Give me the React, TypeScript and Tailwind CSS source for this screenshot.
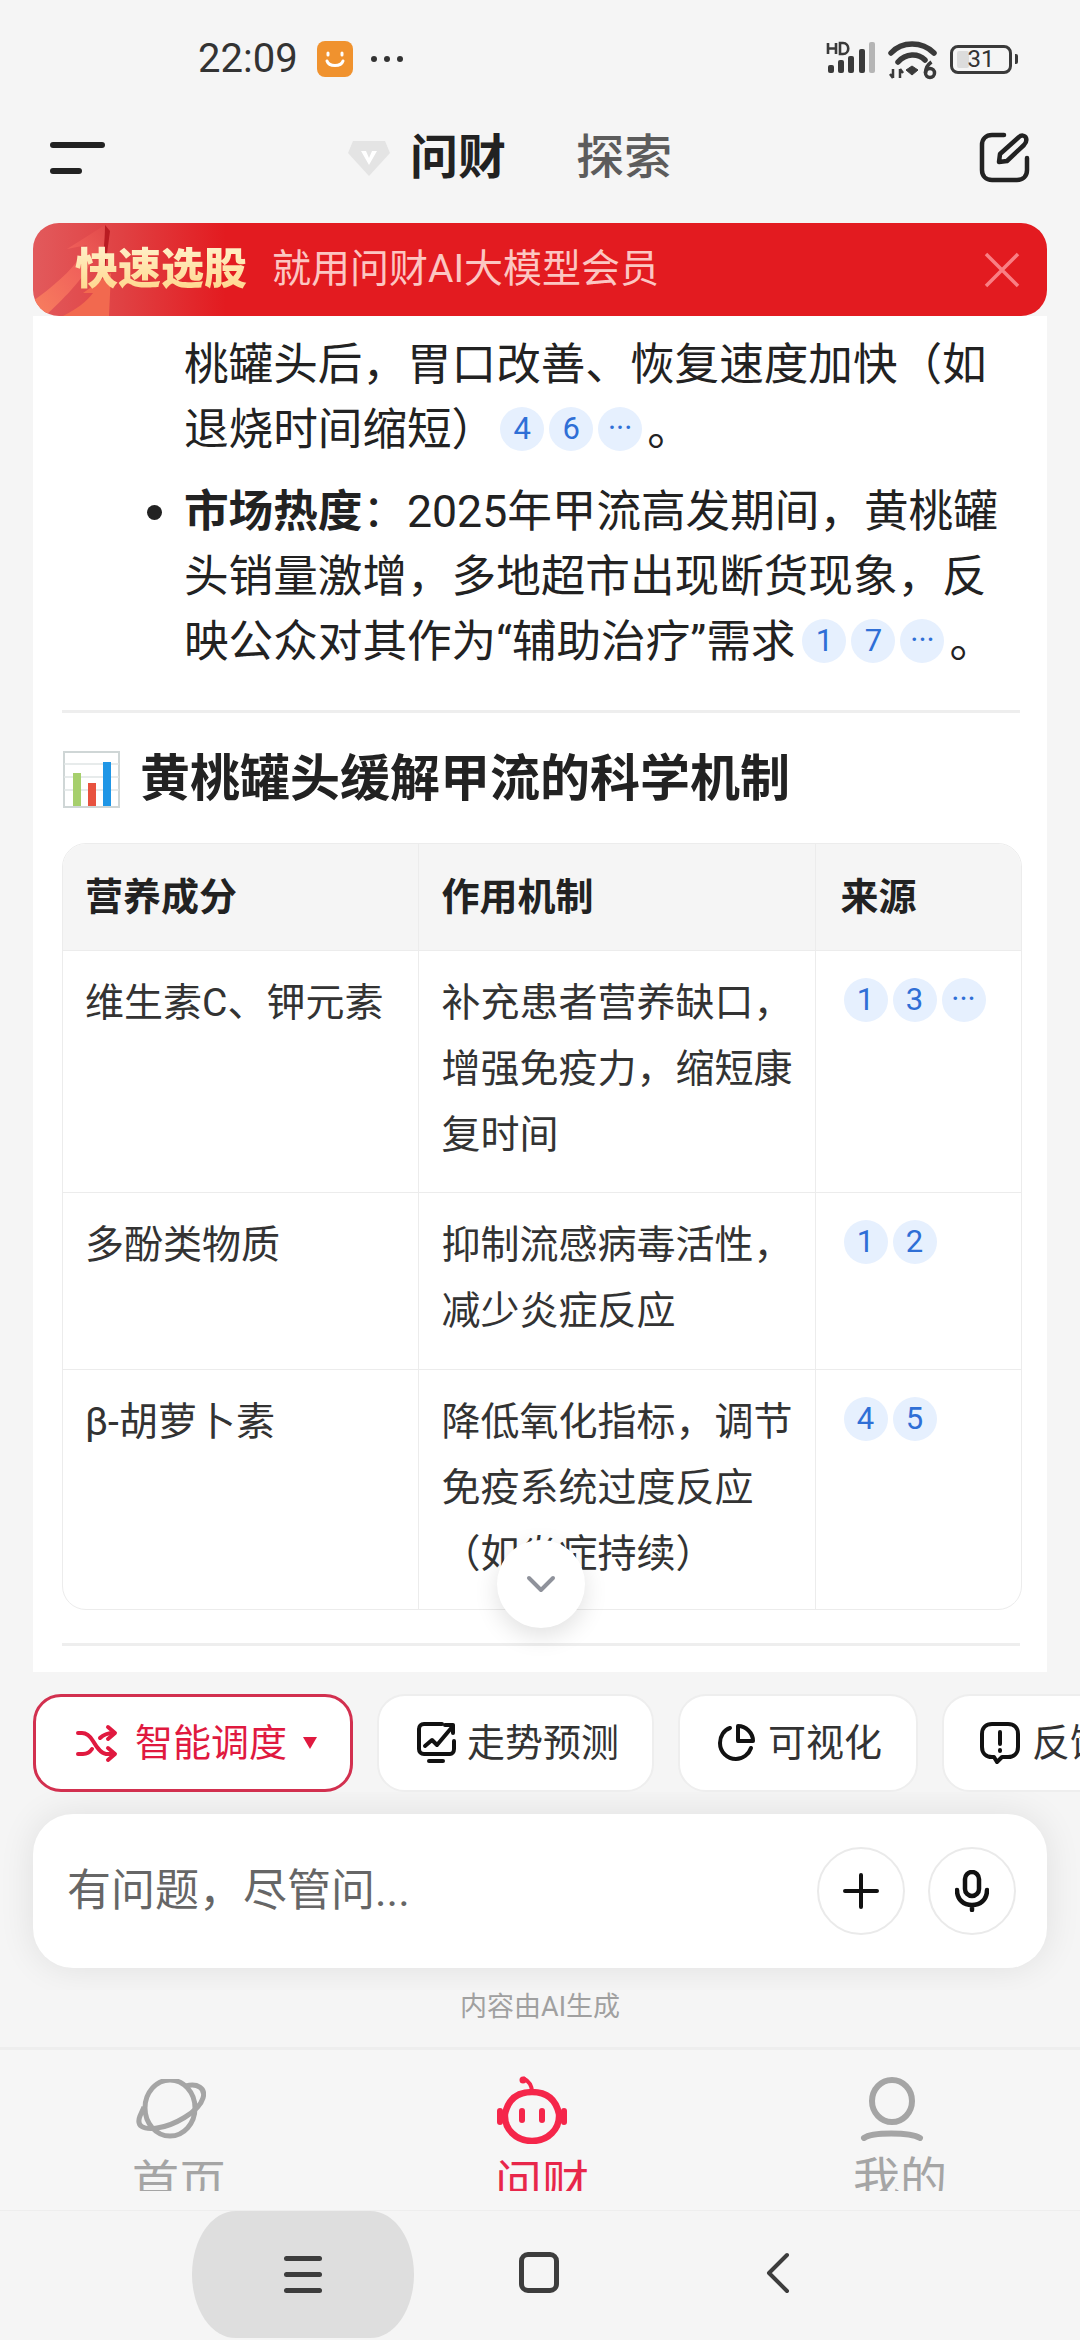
import type { ReactNode } from 'react';

// Citation bubble, used both inline in text and in the table
function Cite({ label }: { label: string }) {
  return (
    <span className="inline-flex w-[44px] h-[44px] mr-[5px] rounded-full bg-[#e6f0fe] text-[#2f6fd6] text-[31px] leading-none tracking-normal items-center justify-center align-[6px]">
      {label}
    </span>
  );
}

function StatusBar() {
  return (
    <div className="h-[100px] pt-[18px] pl-[198px] pr-[62px] flex items-center justify-between text-[#333]">
      <div className="flex items-center">
        <span className="text-[40px] leading-none">22:09</span>
        <div className="ml-[19px] w-[36px] h-[36px] rounded-[8px] bg-[#f0922e]">
          <svg viewBox="0 0 36 36" className="w-[36px] h-[36px]" fill="none" stroke="#fff" strokeLinecap="round">
            <path d="M11 12v2M25 12v2" strokeWidth="3" />
            <path d="M10 20c2 6 14 6 16 0" strokeWidth="3" />
          </svg>
        </div>
        <div className="ml-[18px] flex gap-[7px]">
          <span className="w-[6px] h-[6px] rounded-full bg-[#333]" />
          <span className="w-[6px] h-[6px] rounded-full bg-[#333]" />
          <span className="w-[6px] h-[6px] rounded-full bg-[#333]" />
        </div>
      </div>
      <div className="flex items-center">
        <svg width="54" height="36" viewBox="0 0 54 36" fill="#3a3a3a">
          <rect x="3" y="24" width="6" height="8" rx="2" />
          <rect x="13" y="19" width="6" height="13" rx="2" />
          <rect x="23" y="15" width="6" height="17" rx="2" />
          <rect x="34" y="8" width="6" height="24" rx="2" />
          <rect x="44" y="1" width="6" height="31" rx="2" fill="#b5b5b5" />
          <path d="M3 2v11M11 2v11M3 7.5h8" stroke="#3a3a3a" strokeWidth="2.6" fill="none" />
          <path d="M15 2v11h3c7 0 7-11 0-11z" stroke="#3a3a3a" strokeWidth="2.6" fill="none" />
        </svg>
        <svg width="50" height="40" viewBox="0 0 50 40" fill="none" stroke="#3a3a3a" className="ml-[9px] mt-[4px]">
          <path d="M3 12C14 0 34 0 46 12" strokeWidth="5.5" strokeLinecap="round" />
          <path d="M10 21C18 12 30 12 37 19" strokeWidth="5.5" strokeLinecap="round" />
          <path d="M18 29l6-4 6 4-6 5z" fill="#3a3a3a" strokeWidth="1" />
          <path d="M5 28v9M12 28v9M2 33l3 4M15 32l-3-4" strokeWidth="2.5" />
          <circle cx="42" cy="32" r="4.5" strokeWidth="3.5" />
          <path d="M37.5 32c0-6 3-9 6-11" strokeWidth="3.5" />
        </svg>
        <div className="ml-[12px] relative w-[62px] h-[29px] rounded-[8px] border-[3px] border-[#3a3a3a] flex items-center justify-center">
          <span className="absolute left-[4px] top-[3px] bottom-[3px] w-[12px] bg-[#dcdcdc] rounded-[2px]" />
          <span className="relative text-[24px] leading-none">31</span>
        </div>
        <span className="ml-[3px] w-[3px] h-[10px] bg-[#3a3a3a] rounded-r-[2px]" />
      </div>
    </div>
  );
}

function Header() {
  return (
    <div className="h-[123px] pb-[8px] pl-[50px] flex items-center">
      <div className="w-[55px] flex flex-col gap-[20px]">
        <span className="block w-[55px] h-[6px] rounded-full bg-[#222]" />
        <span className="block w-[32px] h-[6px] rounded-full bg-[#222]" />
      </div>
      <svg width="44" height="38" viewBox="0 0 44 38" className="ml-[242px]">
        <path d="M6 2h32l5 12-21 23L1 14z" fill="#e4e4e4" />
        <path d="M14 12l8 14 8-14h-5l-3 7-3-7z" fill="#fff" />
      </svg>
      <span className="ml-[19px] text-[48px] leading-none font-bold text-[#222]">问财</span>
      <span className="ml-[70px] text-[48px] leading-none font-medium text-[#5c5c5c]">探索</span>
      <svg width="52" height="52" viewBox="0 0 52 52" fill="none" stroke="#222" strokeWidth="4.5" strokeLinecap="round" strokeLinejoin="round" className="ml-auto mr-[49px] mt-[1px]">
        <path d="M25 3H13C7 3 3 7 3 13v25c0 6 4 10 10 10h25c6 0 10-4 10-10V26" />
        <path d="M20 30l1-8L40 5c2-2 6-2 7 1 1 3 0 5-2 7L28 29z" />
      </svg>
    </div>
  );
}

function Banner() {
  return (
    <div className="relative z-10 mx-[33px] h-[93px] rounded-[26px] overflow-hidden bg-[linear-gradient(90deg,#e25a5c_0%,#e04042_9%,#e31b20_19%)] flex items-center">
      <svg width="120" height="93" viewBox="0 0 120 93" className="absolute left-0 top-0">
        <defs>
          <linearGradient id="bannerArrow" x1="0" y1="1" x2="1" y2="0">
            <stop offset="0" stopColor="#f8805f" />
            <stop offset="0.6" stopColor="#f0605a" />
            <stop offset="1" stopColor="#e24a4a" />
          </linearGradient>
        </defs>
        <path d="M72 2l5 6-5 38-2-3z" fill="#b91c22" />
        <path d="M0 78C22 62 44 44 54 22L34 26 72 2 70 43 63 30C52 56 28 78 12 93H0z" fill="url(#bannerArrow)" />
        <path d="M30 93C44 86 54 78 60 70L50 70 78 50 76 93z" fill="#f2694f" />
      </svg>
      <span className="relative ml-[42px] text-[43px] leading-[1.1] font-black bg-[linear-gradient(180deg,#fff0c8,#ffd68a)] bg-clip-text text-transparent">快速选股</span>
      <span className="relative ml-[25px] text-[39px] leading-none text-[#fcc6c2]">就用问财AI大模型会员</span>
      <svg width="36" height="36" viewBox="0 0 36 36" fill="none" stroke="#f97f84" strokeWidth="3.5" className="ml-auto mr-[27px]">
        <path d="M2 2l32 32M34 2L2 34" />
      </svg>
    </div>
  );
}

function Bullet({ children }: { children: ReactNode }) {
  return (
    <li className="relative pl-[151px] whitespace-nowrap">
      <span className="absolute left-[114px] top-[25px] w-[15px] h-[15px] rounded-full bg-[#222]" />
      {children}
    </li>
  );
}

const tableRows = [
  { name: '维生素C、钾元素', mech: ['补充患者营养缺口，', '增强免疫力，缩短康', '复时间'], refs: ['1', '3', '···'], h: 'h-[242px]' },
  { name: '多酚类物质', mech: ['抑制流感病毒活性，', '减少炎症反应'], refs: ['1', '2'], h: 'h-[177px]' },
  { name: 'β-胡萝卜素', mech: ['降低氧化指标，调节', '免疫系统过度反应', '（如炎症持续）'], refs: ['4', '5'], h: 'h-[240px]' },
];

function ScienceTable() {
  return (
    <div className="ml-[29px] mr-[25px] mt-[35px] rounded-[24px] border border-[#ececec] overflow-hidden">
      <table className="w-full table-fixed border-collapse text-[39px] leading-[66px] text-[#333]">
        <colgroup>
          <col className="w-[355px]" />
          <col className="w-[397px]" />
          <col />
        </colgroup>
        <thead>
          <tr className="h-[106px] bg-[#f5f5f5] text-[38px] text-[#222] text-left">
            <th className="pl-[22px] font-bold">营养成分</th>
            <th className="pl-[23px] font-bold border-l border-[#ececec]">作用机制</th>
            <th className="pl-[25px] font-bold border-l border-[#ececec]">来源</th>
          </tr>
        </thead>
        <tbody>
          {tableRows.map((row) => (
            <tr key={row.name} className={`${row.h} border-t border-[#ececec] align-top`}>
              <td className="pl-[22px] pt-[19px]">{row.name}</td>
              <td className="pl-[23px] pt-[19px] border-l border-[#ececec] whitespace-nowrap">
                {row.mech.map((line) => (
                  <div key={line}>{line}</div>
                ))}
              </td>
              <td className="pl-[28px] pt-[27px] border-l border-[#ececec]">
                <div className="flex">
                  {row.refs.map((r) => (
                    <Cite key={r} label={r} />
                  ))}
                </div>
              </td>
            </tr>
          ))}
        </tbody>
      </table>
    </div>
  );
}

function Article() {
  return (
    <div className="relative z-0 mx-[33px] h-[1356px] bg-white overflow-hidden">
      <ul className="-mt-[48px] text-[44.6px] leading-[65px] text-[#222] flex flex-col gap-[17px]">
        <Bullet>
          {/* scrolled under the banner, only a comma tail shows */}
          <span className="relative -top-[9px]">
            <b className="font-bold">患者反馈</b>：部分患者称，食用黄
          </span>
          <br />
          桃罐头后，胃口改善、恢复速度加快（如
          <br />
          退烧时间缩短）
          <span className="ml-[4px]" />
          <Cite label="4" />
          <Cite label="6" />
          <Cite label="···" />。
        </Bullet>
        <Bullet>
          <b className="font-bold">市场热度</b>：2025年甲流高发期间，黄桃罐
          <br />
          头销量激增，多地超市出现断货现象，反
          <br />
          映公众对其作为“辅助治疗”需求
          <span className="ml-[7px]" />
          <Cite label="1" />
          <Cite label="7" />
          <Cite label="···" />。
        </Bullet>
      </ul>
      <div className="ml-[29px] mr-[27px] mt-[35px] h-[3px] bg-[#eee]" />
      <div className="ml-[30px] mt-[37px] flex items-center gap-[20px] h-[58px]">
        <svg width="57" height="57" viewBox="0 0 57 57">
          <rect x="1" y="1" width="55" height="55" fill="#fff" stroke="#cfd6d6" strokeWidth="2" />
          <path d="M1 13h55M1 26h55M1 39h55" stroke="#dfe5e5" strokeWidth="1.5" />
          <rect x="10" y="22" width="8" height="33" fill="#a6cf6c" />
          <rect x="25" y="32" width="8" height="23" fill="#e8523f" />
          <rect x="40" y="11" width="8" height="44" fill="#1f96e6" />
        </svg>
        <h2 className="text-[50px] leading-none font-bold text-[#222]">黄桃罐头缓解甲流的科学机制</h2>
      </div>
      <ScienceTable />
      <div className="ml-[29px] mr-[27px] mt-[33px] h-[3px] bg-[#eee]" />
      <button className="absolute left-[464px] top-[1224px] w-[88px] h-[88px] rounded-full bg-white shadow-[0_8px_24px_rgba(0,0,0,0.12)] flex items-center justify-center">
        <svg width="30" height="18" viewBox="0 0 30 18" fill="none" stroke="#8f929b" strokeWidth="4" strokeLinecap="round" strokeLinejoin="round">
          <path d="M3 3l12 12L27 3" />
        </svg>
      </button>
    </div>
  );
}

function Chip({ icon, label, className }: { icon: ReactNode; label: string; className: string }) {
  return (
    <div className={`shrink-0 h-[98px] rounded-[28px] bg-white border-2 border-[#eee] flex items-center text-[38px] leading-none text-[#333] ${className}`}>
      {icon}
      {label}
    </div>
  );
}

function ChipRow() {
  return (
    <div className="h-[120px] pt-[22px] pl-[33px] flex gap-[23px] overflow-hidden">
      <div className="shrink-0 w-[320px] h-[98px] pl-[40px] rounded-[28px] bg-white border-[3px] border-[#d2304f] flex items-center text-[38px] leading-none text-[#e0193f]">
        <svg width="42" height="46" viewBox="0 0 42 46" fill="none" stroke="#e0193f" strokeWidth="4" strokeLinecap="round" strokeLinejoin="round" className="mr-[17px]">
          <path d="M2 13h4c5 0 8 3 11 8s7 12 13 13h8" />
          <path d="M2 34h5c4 0 7-2 9-5M24 18c3-3 6-5 14-5" />
          <path d="M32 7l7 6-7 6M32 28l7 6-7 6" />
        </svg>
        智能调度
        <svg width="14" height="14" viewBox="0 0 14 14" className="ml-[16px]">
          <path d="M0 1h14L7 13z" fill="#e0193f" />
        </svg>
      </div>
      <Chip
        className="w-[277px] pl-[37px] ml-[1px]"
        label="走势预测"
        icon={
          <svg width="40" height="44" viewBox="0 0 40 44" fill="none" stroke="#111" strokeWidth="4" strokeLinecap="round" strokeLinejoin="round" className="mr-[11px]">
            <path d="M26 3H8C5 3 3 5 3 8v20c0 3 2 5 5 5h26c2 0 4-2 4-5V20" />
            <path d="M9 25l7-6 5 5L37 5" />
            <path d="M29 4h8v8" />
            <path d="M13 40h14" />
          </svg>
        }
      />
      <Chip
        className="w-[240px] pl-[37px] ml-[1px]"
        label="可视化"
        icon={
          <svg width="40" height="40" viewBox="0 0 40 40" fill="none" stroke="#111" strokeWidth="4" strokeLinecap="round" strokeLinejoin="round" className="mr-[11px]">
            <path d="M13 5C7 7 3 13 3 20c0 9 7 16 16 16 7 0 13-5 15-11" />
            <path d="M21 3v15h15C36 10 29 3 21 3z" />
          </svg>
        }
      />
      <Chip
        className="w-[240px] pl-[35px] ml-[1px]"
        label="反馈"
        icon={
          <svg width="42" height="44" viewBox="0 0 42 44" fill="none" stroke="#111" strokeWidth="4" strokeLinecap="round" strokeLinejoin="round" className="mr-[11px]">
            <path d="M13 3h16c6 0 10 4 10 10v13c0 6-4 10-10 10H23l-5 5-3-5h-2C7 36 3 32 3 26V13C3 7 7 3 13 3z" />
            <path d="M21 11v12M21 29v1" />
          </svg>
        }
      />
    </div>
  );
}

function InputBox() {
  return (
    <div className="h-[198px] pt-[22px] overflow-hidden">
      <div className="mx-[33px] h-[154px] rounded-[40px] bg-white shadow-[0_0_36px_rgba(0,0,0,0.09)] pl-[34px] pr-[31px] flex items-center">
        <span className="text-[44px] leading-none text-[#666]">有问题，尽管问...</span>
        <div className="ml-auto w-[88px] h-[88px] rounded-full border-2 border-[#eaeaea] flex items-center justify-center">
          <svg width="36" height="36" viewBox="0 0 36 36" stroke="#111" strokeWidth="4" strokeLinecap="round">
            <path d="M18 2v32M2 18h32" />
          </svg>
        </div>
        <div className="ml-[23px] w-[88px] h-[88px] rounded-full border-2 border-[#eaeaea] flex items-center justify-center">
          <svg width="34" height="42" viewBox="0 0 34 42" fill="none" stroke="#111" strokeWidth="4.5" strokeLinecap="round">
            <rect x="10" y="2" width="14" height="24" rx="7" />
            <path d="M2 20c0 10 7 15 15 15s15-5 15-15M17 35v5" />
          </svg>
        </div>
      </div>
    </div>
  );
}

function TabBar() {
  return (
    <div className="h-[163px] border-t-[3px] border-[#eee] bg-[#f6f6f6]">
      <div className="h-[141px] overflow-hidden flex">
        <div className="w-[358px] pl-[132px] pt-[29px] text-[#a5a5a5]">
          <svg width="70" height="60" viewBox="-1 -1 70 60" fill="none" stroke="#a5a5a5" strokeWidth="5" className="ml-[4px] mb-[20px]">
            <ellipse cx="33" cy="28" rx="25" ry="28" />
            <path d="M49 6C60 3 69 8 66 18C62 32 36 46 20 48C6 50 -1 46 3 36L7 27" />
          </svg>
          <span className="block text-[47px] leading-none">首页</span>
        </div>
        <div className="w-[362px] pl-[137px] pt-[26px] text-[#e8264a]">
          <svg width="74" height="68" viewBox="0 0 74 68" fill="none" stroke="#f5264a" strokeWidth="6.5" className="mb-[15px]">
            <path d="M37 16C37 8 32 4 28 2" strokeWidth="4" />
            <circle cx="28" cy="4" r="3.5" fill="#f5264a" stroke="none" />
            <path d="M37 16c16 0 24 8 27 22 1 15-11 27-27 27S9 53 10 38c3-14 11-22 27-22z" />
            <rect x="2" y="32" width="6" height="17" rx="3" fill="#f5264a" stroke="none" />
            <rect x="66" y="32" width="6" height="17" rx="3" fill="#f5264a" stroke="none" />
            <rect x="24" y="32" width="6" height="15" rx="3" fill="#f5264a" stroke="none" />
            <rect x="44" y="32" width="6" height="15" rx="3" fill="#f5264a" stroke="none" />
          </svg>
          <span className="block text-[47px] leading-none">问财</span>
        </div>
        <div className="pl-[133px] pt-[27px] text-[#a5a5a5]">
          <svg width="64" height="64" viewBox="0 0 64 64" fill="none" stroke="#a5a5a5" strokeLinecap="round" className="ml-[7px] mb-[15px]">
            <ellipse cx="32" cy="24" rx="20" ry="21" strokeWidth="6" />
            <path d="M4 61c8-6 46-6 56 0" strokeWidth="6" />
          </svg>
          <span className="block text-[47px] leading-none">我的</span>
        </div>
      </div>
    </div>
  );
}

function NavBar() {
  return (
    <div className="h-[130px] border-t border-[#eee] bg-[#f5f5f5] flex items-start">
      <div className="ml-[192px] w-[222px] h-[127px] rounded-[44px/64px] bg-[#dedede] flex flex-col items-center justify-center gap-[11px]">
        <span className="w-[38px] h-[5px] rounded-full bg-[#3d3d3d]" />
        <span className="w-[38px] h-[5px] rounded-full bg-[#3d3d3d]" />
        <span className="w-[38px] h-[5px] rounded-full bg-[#3d3d3d]" />
      </div>
      <div className="ml-[105px] mt-[41px] w-[40px] h-[41px] rounded-[9px] border-[5px] border-[#3d3d3d]" />
      <svg width="28" height="42" viewBox="0 0 28 42" fill="none" stroke="#3d3d3d" strokeWidth="4" strokeLinecap="round" strokeLinejoin="round" className="ml-[204px] mt-[41px]">
        <path d="M24 3L6 21l18 18" />
      </svg>
    </div>
  );
}

export default function App() {
  return (
    <div className="w-[1080px] h-[2340px] overflow-hidden bg-[#f5f5f5] font-['Roboto','Noto_Sans_CJK_SC',sans-serif]">
      <StatusBar />
      <Header />
      <Banner />
      <Article />
      <ChipRow />
      <InputBox />
      <div className="h-[57px] pt-[2px] text-center text-[27px] leading-[30px] text-[#a0a0a0]">内容由AI生成</div>
      <TabBar />
      <NavBar />
    </div>
  );
}
